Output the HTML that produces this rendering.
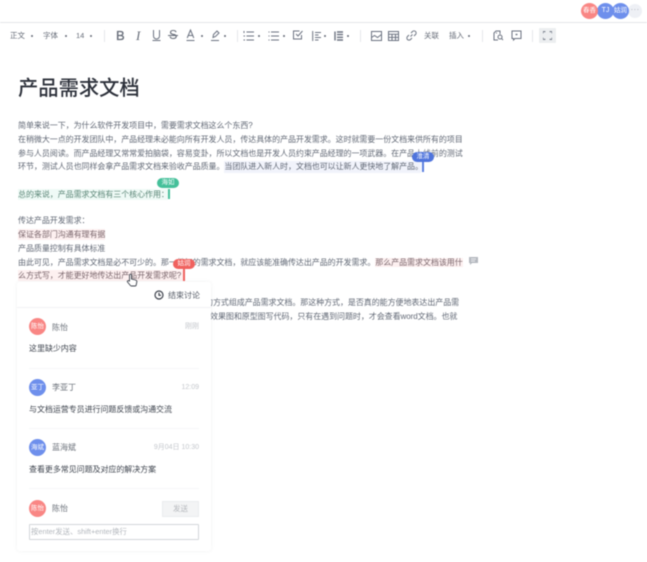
<!DOCTYPE html>
<html lang="zh">
<head>
<meta charset="utf-8">
<style>
html,body{margin:0;padding:0;background:#fff}
body{width:647px;height:562px;overflow:hidden;position:relative;font-family:"Liberation Sans","Noto Sans CJK SC",sans-serif}
#w{position:absolute;left:0;top:0;width:647px;height:562px;filter:blur(.5px);overflow:hidden}
.a{position:absolute;white-space:nowrap}
.t{position:absolute;left:18px;font-size:8px;line-height:12px;height:12px;color:#616875;white-space:nowrap;letter-spacing:-.06px}
.tb{position:absolute;font-size:7.5px;line-height:10px;color:#666c78;white-space:nowrap}
.sep{position:absolute;top:30px;width:1px;height:12px;background:#e6e8eb}
.dot{position:absolute;top:34.5px;width:2px;height:2px;border-radius:50%;background:#666c78}
svg.i{position:absolute;fill:none;stroke:#6b7280;stroke-width:1}
.av{position:absolute;border-radius:50%;color:#fff;text-align:center;font-size:6.5px}
.name{position:absolute;left:52px;font-size:8px;line-height:12px;color:#6a7079;white-space:nowrap}
.msg{position:absolute;left:29px;font-size:8px;line-height:12px;color:#3f454f;white-space:nowrap;letter-spacing:-.06px}
.time{position:absolute;font-size:7px;line-height:10px;color:#c4c7cc;white-space:nowrap}
.hr{position:absolute;left:29px;width:170px;height:1px;background:#f6f7f8}
.tag{position:absolute;height:10px;border-radius:5px;color:#fff;font-size:6.5px;line-height:10px;text-align:center}
.ic{position:absolute;color:#666c78;white-space:nowrap}
</style>
</head>
<body>
<div id="w">
  <!-- top border -->
  <div class="a" style="left:0;top:22px;width:647px;height:1px;background:#e4e6e9"></div>

  <!-- avatars -->
  <div class="av" style="left:628px;top:4px;width:14px;height:14px;line-height:12px;background:#eef0f5;color:#a8adb8;font-size:8px;letter-spacing:.3px">···</div>
  <div class="av" style="left:612px;top:3px;width:17px;height:16px;line-height:16px;background:#6e8fec">姑润</div>
  <div class="av" style="left:597px;top:3px;width:17px;height:16px;line-height:16px;background:#6e8fec;font-size:7px">TJ</div>
  <div class="av" style="left:581px;top:3px;width:17px;height:16px;line-height:16px;background:#f98684">春香</div>

  <!-- toolbar -->
  <div class="tb" style="left:10px;top:31px">正文</div><div class="dot" style="left:31px"></div>
  <div class="tb" style="left:43px;top:31px">字体</div><div class="dot" style="left:65px"></div>
  <div class="tb" style="left:76px;top:31px">14</div><div class="dot" style="left:90px"></div>
  <div class="sep" style="left:104px"></div>

  <div class="ic" style="left:116px;top:28px;font:400 13px/15px 'Liberation Sans';-webkit-text-stroke:.3px #666c78">B</div>
  <div class="ic" style="left:136px;top:28px;font:italic 400 13px/15px 'Liberation Serif'">I</div>
  <svg class="i" style="left:152px;top:29px" width="9" height="13" viewBox="0 0 9 13"><path d="M1.500 1v6a3 3 0 0 0 6 0V1M.5 11.500h8"/></svg>
  <div class="ic" style="left:169px;top:28px;font:400 12.500px/15px 'Liberation Sans'">S</div>
  <div class="a" style="left:168px;top:35px;width:10px;height:1px;background:#666c78"></div>
  <svg class="i" style="left:186px;top:29px" width="9" height="13" viewBox="0 0 9 13"><path d="M1.200 9L4.500 1l3.300 8M2.300 6.500h4.400M.5 11.500h8"/></svg><div class="dot" style="left:201px"></div>
  <svg class="i" style="left:210px;top:29px" width="11" height="13" viewBox="0 0 11 13"><path d="M3 8.500l.5-3L7 2l2 2-3.500 3.500zM1 11.500h8"/></svg><div class="dot" style="left:224px"></div>
  <div class="sep" style="left:237px"></div>

  <svg class="i" style="left:243px;top:31px" width="11" height="10" viewBox="0 0 11 10"><path d="M3.500 1h7.500M3.500 5h7.500M3.500 9h7.500M1 0v2M.5 5h1.500M.5 9h1.500"/></svg><div class="dot" style="left:258px"></div>
  <svg class="i" style="left:268px;top:31px" width="11" height="10" viewBox="0 0 11 10"><path d="M3 1h8M3 5h8M3 9h8M.5 1h1M.5 5h1M.5 9h1"/></svg><div class="dot" style="left:283px"></div>
  <svg class="i" style="left:293px;top:30px" width="10" height="10" viewBox="0 0 10 10"><path d="M8.500 5v4h-8v-8h6M3 4l2 2 4.500-5"/></svg>
  <svg class="i" style="left:312px;top:31px" width="9" height="10" viewBox="0 0 9 10" stroke-width="1.200"><path d="M.7 0v10M3 1.500h6M3 4h3.500M3 6.500h6M3 9h3.500"/></svg><div class="dot" style="left:324px"></div>
  <svg class="i" style="left:334px;top:31px" width="9" height="10" viewBox="0 0 9 10"><path d="M3 1h6M3 3.600h6M3 6.300h6M3 9h6M1 .5v9" stroke-width="1.400"/></svg><div class="dot" style="left:347px"></div>
  <div class="sep" style="left:360px"></div>

  <svg class="i" style="left:371px;top:31px" width="11" height="10" viewBox="0 0 11 10"><rect x=".5" y=".5" width="10" height="9"/><path d="M.5 6.500l3-2 3 2 4-3"/></svg>
  <svg class="i" style="left:388px;top:31px" width="11" height="10" viewBox="0 0 11 10"><rect x=".5" y=".5" width="10" height="9"/><path d="M.5 3.300h10M.5 6.400h10M4 3.300v6M7.500 3.300v6"/></svg>
  <svg class="i" style="left:406px;top:30px" width="11" height="11" viewBox="0 0 11 11"><path d="M4.500 6.500l2-2M5 3l1.500-1.500a2 2 0 0 1 3 3L8 6M6 8L4.500 9.500a2 2 0 0 1-3-3L3 5"/></svg>
  <div class="tb" style="left:424px;top:31px">关联</div>
  <div class="tb" style="left:449px;top:31px">插入</div><div class="dot" style="left:468px"></div>
  <div class="sep" style="left:482px"></div>

  <svg class="i" style="left:493px;top:30px" width="11" height="11" viewBox="0 0 11 11"><path d="M5 10H1V3l2-2h4v3M3 3h1"/><circle cx="7" cy="7" r="2"/><path d="M8.500 8.500l1.500 1.500"/></svg>
  <svg class="i" style="left:511px;top:30px" width="11" height="11" viewBox="0 0 11 11"><path d="M1 1h9v7.500H4L2.500 10V8.500H1z"/><path d="M4.500 4.500h2" stroke-width="1.300"/></svg>
  <div class="sep" style="left:532px"></div>
  <div class="a" style="left:539px;top:28px;width:17px;height:15px;background:#eceef0;border-radius:1px"></div>
  <svg class="i" style="left:543px;top:31px" width="9" height="9" viewBox="0 0 9 9" stroke-width="1.300"><path d="M0 2.500V.6h2.400M6.600.6H9v1.900M9 6.500v1.900H6.600M2.400 8.400H0V6.500"/></svg>

  <!-- title -->
  <div class="a" style="left:18px;top:76px;font-size:20.300px;line-height:26px;font-weight:500;color:#2c303a">产品需求文档</div>

  <!-- body -->
  <div class="t" style="top:120px">简单来说一下，为什么软件开发项目中，需要需求文档这么个东西?</div>
  <div class="t" style="top:134px">在稍微大一点的开发团队中，产品经理未必能向所有开发人员，传达具体的产品开发需求。这时就需要一份文档来供所有的项目</div>
  <div class="t" style="top:147.500px">参与人员阅读。而产品经理又常常爱拍脑袋，容易变卦，所以文档也是开发人员约束产品经理的一项武器。在产品上线前的测试</div>
  <div class="a" style="left:224px;top:161px;width:197px;height:12px;background:#f1f3fb"></div>
  <div class="t" style="top:161px">环节，测试人员也同样会拿产品需求文档来验收产品质量。当团队进入新人时，文档也可以让新人更快地了解产品。</div>
  <div class="a" style="left:422px;top:162px;width:1.500px;height:10px;background:#5b7fe0"></div>
  <div class="tag" style="left:412px;top:152px;width:22px;background:#4f74dc">淮清</div>

  <div class="a" style="left:18px;top:189px;width:150px;height:11px;background:#effaf6"></div>
  <div class="t" style="top:188.500px;color:#5b8677">总的来说，产品需求文档有三个核心作用：</div>
  <div class="a" style="left:168px;top:189px;width:1.500px;height:10px;background:#45c09a"></div>
  <div class="tag" style="left:157px;top:178px;width:22px;background:#45c09a">海如</div>

  <div class="t" style="top:215px">传达产品开发需求：</div>
  <div class="a" style="left:18px;top:229px;width:87px;height:11px;background:#fdf0f0"></div>
  <div class="t" style="top:229px;color:#7a666c">保证各部门沟通有理有据</div>
  <div class="t" style="top:242.500px">产品质量控制有具体标准</div>
  <div class="t" style="top:256.500px">由此可见，产品需求文档是必不可少的。那一份好的需求文档，就应该能准确传达出产品的开发需求。<span style="background:#fdf0f0;color:#7a666c">那么产品需求文档该用什</span></div>
  <div class="a" style="left:18px;top:270px;width:165px;height:11px;background:#fdf0f0"></div>
  <div class="t" style="top:270px;color:#7a666c">么方式写，才能更好地传达出产品开发需求呢?</div>
  <div class="a" style="left:183px;top:269px;width:1.500px;height:12px;background:#f0625f"></div>
  <div class="tag" style="left:173px;top:259px;width:22px;background:#f0625f">姑润</div>
  <svg class="a" style="left:469px;top:257px" width="9" height="8" viewBox="0 0 9 8"><path d="M0 0h9v6H3L1 8V6H0z" fill="#b4b8bf"/><path d="M2 2h5M2 4h4" stroke="#fff" stroke-width=".7"/></svg>

  <div class="t" style="left:205px;top:296.500px">的方式组成产品需求文档。那这种方式，是否真的能方便地表达出产品需</div>
  <div class="t" style="left:210px;top:311px">效果图和原型图写代码，只有在遇到问题时，才会查看word文档。也就</div>

  <!-- discussion panel -->
  <div class="a" style="left:17px;top:282px;width:194px;height:269px;background:#fff;border-radius:3px;box-shadow:0 0 4px rgba(40,50,70,.07)">
    <svg style="position:absolute;left:137px;top:8px" width="10" height="10" viewBox="0 0 10 10" fill="none" stroke="#3d424c" stroke-width="1.200"><circle cx="5" cy="5" r="4"/><path d="M5 2.800V5.300h2"/></svg>
    <div class="a" style="left:151px;top:8px;font-size:8px;line-height:12px;color:#555b66">结束讨论</div>
    <div class="a" style="left:0;top:25px;width:194px;height:1px;background:#f1f2f4"></div>
  </div>
  <div class="a" style="left:0;top:0;width:230px;height:562px">
    <div class="av" style="left:29px;top:318px;width:17px;height:17px;line-height:17px;background:#f98684">陈怡</div>
    <div class="name" style="top:321.500px">陈怡</div>
    <div class="time" style="right:31px;top:322px">刚刚</div>
    <div class="msg" style="top:343px">这里缺少内容</div>
    <div class="hr" style="top:368px"></div>

    <div class="av" style="left:29px;top:379px;width:17px;height:17px;line-height:17px;background:#6e8fec">亚丁</div>
    <div class="name" style="top:382px">李亚丁</div>
    <div class="time" style="right:31px;top:383px">12:09</div>
    <div class="msg" style="top:404px">与文档运营专员进行问题反馈或沟通交流</div>
    <div class="hr" style="top:428px"></div>

    <div class="av" style="left:29px;top:439px;width:17px;height:17px;line-height:17px;background:#6e8fec">海斌</div>
    <div class="name" style="top:442px">蓝海斌</div>
    <div class="time" style="right:31px;top:442.500px">9月04日 10:30</div>
    <div class="msg" style="top:464px">查看更多常见问题及对应的解决方案</div>
    <div class="hr" style="top:488px"></div>

    <div class="av" style="left:29px;top:500px;width:17px;height:17px;line-height:17px;background:#f98684">陈怡</div>
    <div class="name" style="top:503px">陈怡</div>
    <div class="a" style="left:162px;top:501px;width:37px;height:16px;background:#f3f4f5;border:1px solid #ebecee;box-sizing:border-box;color:#b4b7bc;font-size:7.500px;line-height:14px;text-align:center">发送</div>
    <div class="a" style="left:29px;top:524px;width:170px;height:16px;border:1px solid #d3d6da;border-radius:1px;box-sizing:border-box;color:#b3b7bd;font-size:7.400px;line-height:14px;padding-left:1px">按enter发送、shift+enter换行</div>
  </div>

  <!-- hand cursor -->
  <svg class="a" style="left:126px;top:273px" width="12" height="14" viewBox="0 0 12 14"><path d="M3.500 8V2.200a1 1 0 0 1 2 0V6l4 1c1 .3 1.500 1 1.300 2l-.6 3c-.1.600-.6 1-1.200 1H5.500c-.5 0-.9-.2-1.200-.6L1.500 9c-.5-.8.5-1.800 1.300-1.200z" fill="#fff" stroke="#3d424c" stroke-width=".9"/></svg>
</div>
</body>
</html>
